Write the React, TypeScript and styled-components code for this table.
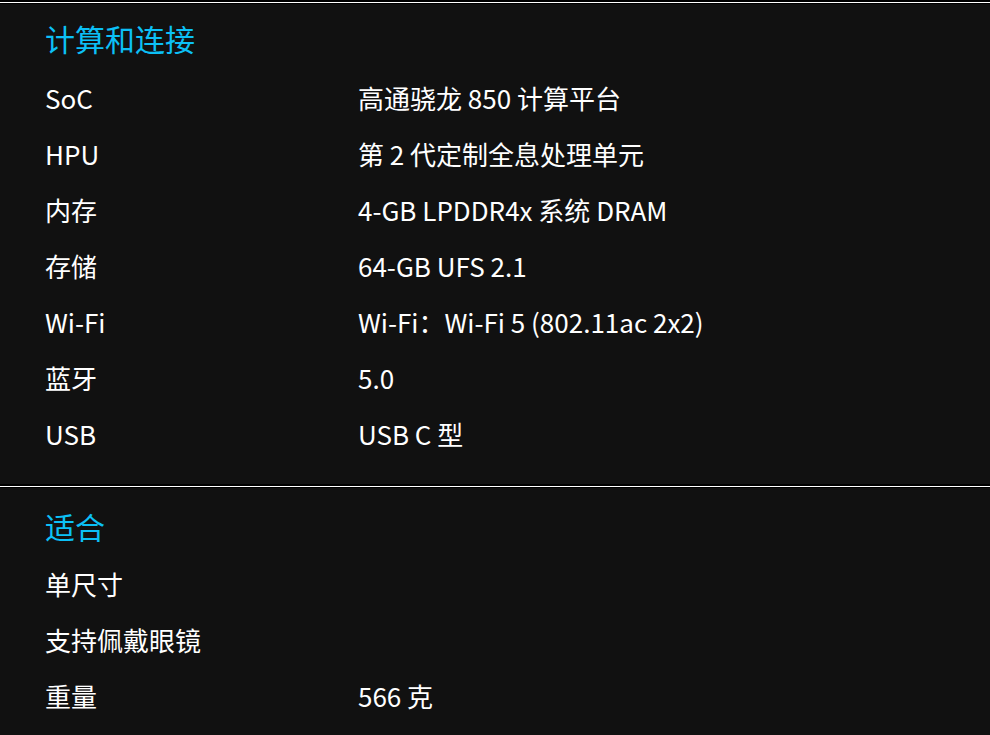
import styled, { createGlobalStyle } from "styled-components";

const specs = [
  {
    title: "计算和连接",
    top: 12,
    gap: 9,
    rows: [
      ["SoC", "高通骁龙 850 计算平台"],
      ["HPU", "第 2 代定制全息处理单元"],
      ["内存", "4-GB LPDDR4x 系统 DRAM"],
      ["存储", "64-GB UFS 2.1"],
      ["Wi-Fi", "Wi-Fi：Wi-Fi 5 (802.11ac 2x2)"],
      ["蓝牙", "5.0"],
      ["USB", "USB C 型"],
    ],
  },
  {
    title: "适合",
    top: 16,
    gap: 7,
    rows: [
      ["单尺寸", ""],
      ["支持佩戴眼镜", ""],
      ["重量", "566 克"],
    ],
  },
];

export default function App() {
  return (
    <>
      <GlobalStyle />
      <Page>
        {specs.map((section) => (
          <Section key={section.title}>
            <Rule />
            <SectionBody $top={section.top}>
              <SectionTitle $gap={section.gap}>{section.title}</SectionTitle>
              {section.rows.map(([label, value]) => (
                <SpecRow key={label}>
                  <Label>{label}</Label>
                  <Value>{value}</Value>
                </SpecRow>
              ))}
            </SectionBody>
          </Section>
        ))}
      </Page>
    </>
  );
}

const GlobalStyle = createGlobalStyle`
  html, body {
    margin: 0;
    padding: 0;
    background: #111111;
  }
  body {
    font-family: "Noto Sans CJK SC", "Noto Sans", sans-serif;
    color: #ffffff;
  }
`;

const Page = styled.div`
  width: 990px;
  min-height: 735px;
  background: #111111;
`;

const Section = styled.section`
  display: flex;
  flex-direction: column;
`;

const Rule = styled.div`
  height: 1px;
  background: #ffffff;
  border-top: 2px solid #000000;
  border-bottom: 1px solid #000000;
`;

const SectionBody = styled.div<{ $top: number }>`
  padding: ${(p) => p.$top}px 0 23px 45px;
`;

const SectionTitle = styled.h2<{ $gap: number }>`
  margin: 0 0 ${(p) => p.$gap}px;
  font-size: 30px;
  font-weight: 400;
  line-height: 44px;
  color: #0cc0f6;
`;

const SpecRow = styled.div`
  display: grid;
  grid-template-columns: 313px 1fr;
  align-items: center;
  height: 56px;
  font-size: 26px;
`;

const Label = styled.span`
  white-space: nowrap;
`;

const Value = styled.span`
  white-space: nowrap;
`;
